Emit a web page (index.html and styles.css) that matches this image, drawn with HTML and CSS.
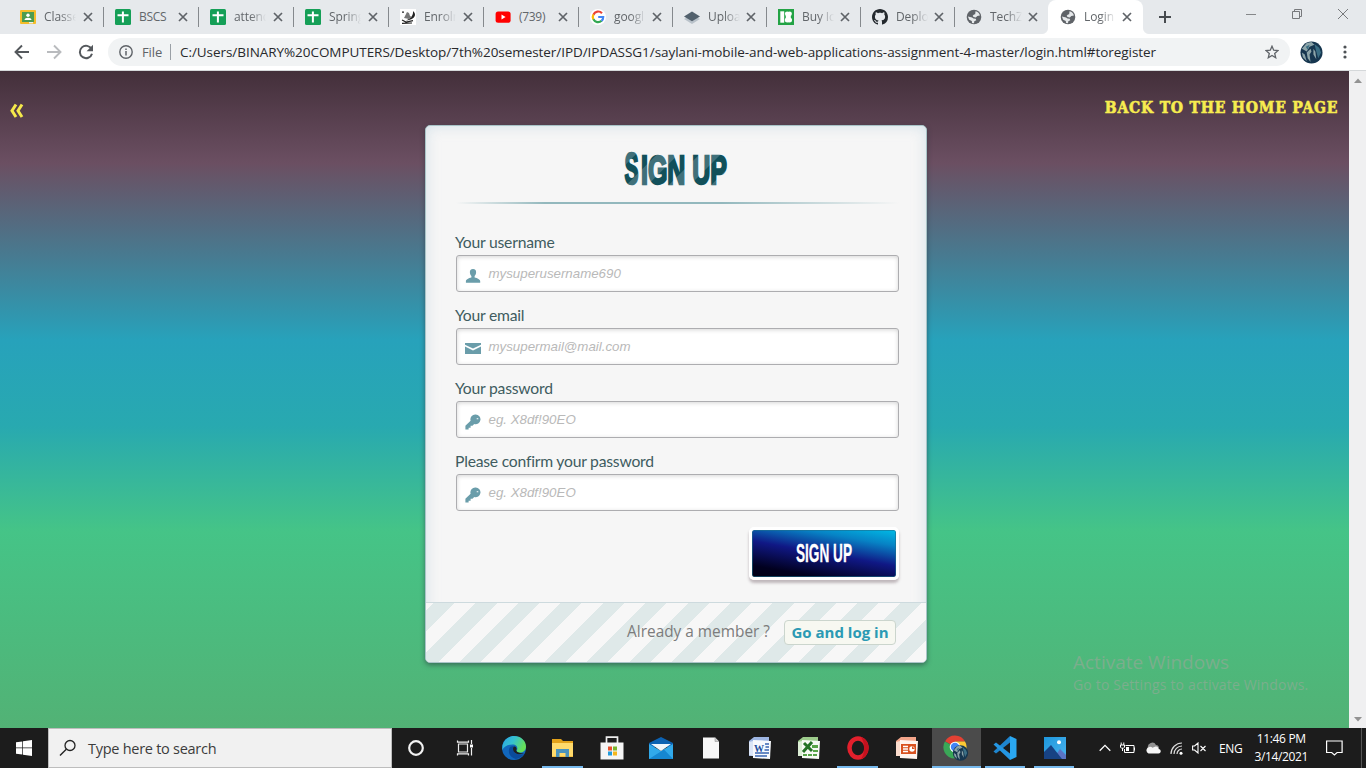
FILE: index.html
```html
<!DOCTYPE html>
<html lang="en">
<head>
<meta charset="utf-8">
<title>Login</title>
<link rel="stylesheet" href="styles.css">
</head>
<body>
<svg class="defs" width="0" height="0">
  <defs>
    <pattern id="titleStripes" width="30" height="30" patternUnits="userSpaceOnUse" patternTransform="rotate(-45)">
      <rect width="30" height="30" fill="#12505a"/><rect width="30" height="15" fill="#40707a"/>
    </pattern>
    <linearGradient id="edgeBlue" x1="0" y1="0" x2="1" y2="0.4"><stop offset="0" stop-color="#2aa5e4"/><stop offset="0.5" stop-color="#35c1d0"/><stop offset="1" stop-color="#66df58"/></linearGradient>
    <linearGradient id="photoSky" x1="0" y1="0" x2="1" y2="1"><stop offset="0" stop-color="#1d97dd"/><stop offset="1" stop-color="#4cb4ee"/></linearGradient>
    <symbol id="close" viewBox="0 0 10 10"><path d="M1 1l8 8M9 1L1 9" stroke="#5f6368" stroke-width="1.7" fill="none"/></symbol>
    <symbol id="sheet" viewBox="0 0 16 16"><rect width="16" height="16" rx="1.5" fill="#159f57"/><path d="M7.9 2.5v11M2.5 6.2h11" stroke="#fff" stroke-width="2" fill="none"/></symbol>
    <symbol id="globe" viewBox="0 0 16 16"><circle cx="8" cy="8" r="7.3" fill="#5f6368"/><path d="M9.500 2.300c2.300.3 4 2 4.400 4.200l-2.600.5-1.500 1.400-2.300-.4-.8-1.300 1.300-1.200 1.200-.2zM1.900 7.500l4.200.9 1.400 1.200 2.200.2.600 1.500-2 .9-.3 2.100-2-.2-.2-2-2.600-1.300z" fill="#e6e9eb"/></symbol>
    <symbol id="key" viewBox="0 0 16 16"><path fill="#6a9daa" fill-rule="evenodd" d="M10.700.4a4.900 4.900 0 0 0-5.100 6.300L.4 11.800V15.500h3.200v-1.800h2v-2h1.900L9.200 10A4.900 4.900 0 1 0 10.700.4zm1 3.800h1.600v1h-1.600z"/></symbol>
    <symbol id="earth" viewBox="0 0 24 24"><circle cx="12" cy="12" r="11.500" fill="#16364f"/><path d="M2 8l5-6 5-1 3 3-5 2-3 5zM7 12l4-4 1 3-2 3 1 8-3-4zM14 8l2 3 1 8-3-5zM2 12l3 2 2 7-4-4z" fill="#8da5a9"/><path d="M15 3l5 4 2 5-3 6-2-7zM6 6l4-2-2 5z" fill="#3b6f85"/></symbol>
  </defs>
</svg>

<div class="screen">
  <div class="tabstrip">
    <div class="tab wide"><svg class="fav" viewBox="0 0 16 16"><rect y="1" width="16" height="14" rx="1" fill="#f4bd2a"/><rect x="2" y="3" width="12" height="10" fill="#4c9c50"/><circle cx="8" cy="6.3" r="1.7" fill="#fff"/><path d="M4.500 11c0-3 7-3 7 0z" fill="#fff"/><path d="M9 13h4v1.400H9z" fill="#eee"/></svg><span class="tab-title">Classe</span><svg class="x"><use href="#close"/></svg></div>
    <div class="tab wide"><svg class="fav"><use href="#sheet"/></svg><span class="tab-title plain">BSCS</span><svg class="x"><use href="#close"/></svg></div>
    <div class="tab wide"><svg class="fav"><use href="#sheet"/></svg><span class="tab-title">attend</span><svg class="x"><use href="#close"/></svg></div>
    <div class="tab wide"><svg class="fav"><use href="#sheet"/></svg><span class="tab-title">Spring</span><svg class="x"><use href="#close"/></svg></div>
    <div class="tab wide"><svg class="fav" viewBox="0 0 16 16"><rect width="16" height="16" fill="#fff"/><path d="M13 2c4.500 4 1 9-7 9.500 4.500-2 7.500-4.500 7-9.500z" fill="#222"/><path d="M4 9l3-6 2 1 1 3 2 1-3 2z" fill="#777"/><path d="M2 3.200h2M2 11l4 2 7-1.300M2 14.300l10-.3" stroke="#222" stroke-width="1.200" fill="none"/></svg><span class="tab-title">Enroln</span><svg class="x"><use href="#close"/></svg></div>
    <div class="tab wide"><svg class="fav" viewBox="0 0 16 16"><rect x=".6" y="2.400" width="15" height="11.400" rx="2.500" fill="#f00"/><path d="M6.500 5.600v4.800L10.600 8z" fill="#fff"/></svg><span class="tab-title plain">(739)</span><svg class="x"><use href="#close"/></svg></div>
    <div class="tab"><svg class="fav" viewBox="0 0 16 16"><circle cx="8" cy="8" r="8" fill="#fff"/><g fill="none" stroke-width="2.200"><path d="M12 4.200A5.200 5.200 0 0 0 3.400 5.700" stroke="#ea4335"/><path d="M3.400 5.500a5.200 5.200 0 0 0 0 5" stroke="#fbbc05"/><path d="M3.400 10.300a5.200 5.200 0 0 0 8.200 1.500" stroke="#34a853"/><path d="M11.500 11.900A5 5 0 0 0 13.200 8H8.200" stroke="#4285f4"/></g></svg><span class="tab-title">googl</span><svg class="x"><use href="#close"/></svg></div>
    <div class="tab"><svg class="fav" viewBox="0 0 16 16"><path d="M0 10l8 5 8-5-8-4z" fill="#b9c2ca"/><path d="M0 7.500L8 2.600l8 4.900-8 4.800z" fill="#52616d"/></svg><span class="tab-title">Uploa</span><svg class="x"><use href="#close"/></svg></div>
    <div class="tab"><svg class="fav" viewBox="0 0 16 16"><rect width="16" height="16" fill="#23a345"/><path d="M2.300 2.300H6.200v11.400H2.300z" fill="#fff"/><g fill="#fff"><circle cx="9.200" cy="4.800" r="2.300"/><circle cx="11.600" cy="4.800" r="2.300"/><circle cx="9.300" cy="11" r="2.500"/><circle cx="11.500" cy="11" r="2.500"/><path d="M7.800 5h5v6h-5z"/></g></svg><span class="tab-title">Buy Ic</span><svg class="x"><use href="#close"/></svg></div>
    <div class="tab"><svg class="fav" viewBox="0 0 16 16"><path fill="#24292e" d="M8 0C3.580 0 0 3.580 0 8c0 3.540 2.290 6.530 5.470 7.590.4.070.550-.170.550-.380 0-.190-.010-.820-.010-1.490-2.010.370-2.530-.490-2.690-.940-.090-.230-.480-.940-.820-1.130-.280-.150-.680-.520-.010-.530.630-.010 1.080.580 1.230.820.720 1.210 1.870.870 2.330.660.070-.520.280-.870.510-1.070-1.780-.2-3.640-.890-3.640-3.950 0-.870.310-1.590.820-2.150-.080-.2-.360-1.020.080-2.120 0 0 .670-.210 2.200.820.640-.180 1.320-.270 2-.270s1.360.090 2 .270c1.530-1.040 2.200-.820 2.200-.820.440 1.100.160 1.920.080 2.120.510.560.820 1.270.820 2.150 0 3.070-1.870 3.750-3.650 3.950.290.250.540.730.540 1.480 0 1.070-.010 1.930-.010 2.200 0 .210.150.460.550.380A8.010 8.010 0 0 0 16 8c0-4.420-3.580-8-8-8z"/></svg><span class="tab-title">Deplo</span><svg class="x"><use href="#close"/></svg></div>
    <div class="tab last"><svg class="fav"><use href="#globe"/></svg><span class="tab-title">TechZ</span><svg class="x"><use href="#close"/></svg></div>
    <div class="tab active"><svg class="fav"><use href="#globe"/></svg><span class="tab-title">Login</span><svg class="x"><use href="#close"/></svg></div>
    <svg class="newtab" viewBox="0 0 12 12"><path d="M6 0v12M0 6h12" stroke="#474b4f" stroke-width="2"/></svg>
    <div class="winbtns">
      <svg width="10" height="10" viewBox="0 0 10 10"><path d="M0 5.500h10" stroke="#858789"/></svg>
      <svg width="10" height="10" viewBox="0 0 10 10"><path d="M.5 2.500h7v7h-7zM2.500 2.500v-2h7v7h-2" stroke="#77797c" fill="none"/></svg>
      <svg width="10" height="10" viewBox="0 0 10 10"><path d="M0 0l10 10M10 0L0 10" stroke="#77797c"/></svg>
    </div>
  </div>

  <div class="toolbar">
    <svg class="nav" viewBox="0 0 16 16"><path d="M15 8H2M8 1.500L1.500 8 8 14.500" stroke="#54585c" stroke-width="1.900" fill="none"/></svg>
    <svg class="nav" viewBox="0 0 16 16"><path d="M1 8h13M8 1.500L14.500 8 8 14.500" stroke="#b9bbbe" stroke-width="1.900" fill="none"/></svg>
    <svg class="nav" viewBox="0 0 16 16"><path d="M13.600 5.200A6.200 6.200 0 1 0 14 9.700" stroke="#54585c" stroke-width="2" fill="none"/><path d="M15 .8v6.400H8.600z" fill="#54585c"/></svg>
    <div class="omnibox">
      <svg class="info" viewBox="0 0 14 14"><circle cx="7" cy="7" r="6.200" stroke="#5f6368" stroke-width="1.400" fill="none"/><path d="M7 6v4.500M7 3.400v1.500" stroke="#5f6368" stroke-width="1.500"/></svg>
      <span class="scheme">File</span>
      <span class="url">C:/Users/BINARY%20COMPUTERS/Desktop/7th%20semester/IPD/IPDASSG1/saylani-mobile-and-web-applications-assignment-4-master/login.html#toregister</span>
      <svg class="star" viewBox="0 0 14 14"><path d="M7 1.200l1.700 4 4.300.4-3.300 2.800 1 4.300L7 10.400l-3.700 2.300 1-4.300L1 5.600l4.300-.4z" stroke="#5f6368" stroke-width="1.300" fill="none"/></svg>
    </div>
    <svg class="avatar"><use href="#earth"/></svg>
    <svg class="dots" viewBox="0 0 4 14"><g fill="#4e5256"><circle cx="2" cy="2" r="1.600"/><circle cx="2" cy="7" r="1.600"/><circle cx="2" cy="12" r="1.600"/></g></svg>
  </div>

  <div class="viewport">
    <main class="page">
      <div class="topbar">
        <svg class="chev" width="16" height="16" viewBox="0 0 16 16"><path d="M7 1.500L3 7.800 7 14M13 1.500L9 7.800l4 6.200" stroke="#f5e94b" stroke-width="3" fill="none"/></svg>
        <svg class="home" width="236" height="24"><text transform="scale(.92 1)" x="2" y="18.500" textLength="253" lengthAdjust="spacing">BACK TO THE HOME PAGE</text></svg>
      </div>
      <section class="card">
        <div class="card-body">
          <svg class="title" width="108" height="44"><text class="cap" x="1.500" y="38" textLength="14" lengthAdjust="spacingAndGlyphs">S</text><text x="18" y="38" textLength="86" lengthAdjust="spacingAndGlyphs">IGN UP</text></svg>
          <div class="rule"></div>
          <div class="field"><span class="label">Your username</span><div class="input"><svg class="ico" viewBox="0 0 16 16"><path fill="#6a9daa" d="M8 .9c2.300 0 3.300 1.500 3.100 3.500-.1 1.500-.6 2.700-1.500 3.500v1.700c2.800.7 5.600 1.800 5.600 3.700v1.500H.9v-1.500c0-1.900 2.800-3 5.500-3.700V7.900c-.9-.8-1.400-2-1.500-3.500C4.700 2.400 5.700.9 8 .9z"/></svg><span class="ph">mysuperusername690</span></div></div>
          <div class="field"><span class="label">Your email</span><div class="input"><svg class="ico" viewBox="0 0 16 16"><path fill="#6a9daa" d="M0 2h16v1.700L8 7.500 0 3.700zM0 5.500l8 4 8-4V13H0z"/></svg><span class="ph">mysupermail@mail.com</span></div></div>
          <div class="field"><span class="label">Your password</span><div class="input"><svg class="ico"><use href="#key"/></svg><span class="ph">eg. X8df!90EO</span></div></div>
          <div class="field"><span class="label">Please confirm your password</span><div class="input"><svg class="ico"><use href="#key"/></svg><span class="ph">eg. X8df!90EO</span></div></div>
          <div class="btn"><svg width="60" height="30"><text x="2" y="23" textLength="56" lengthAdjust="spacingAndGlyphs">SIGN UP</text></svg></div>
        </div>
        <div class="card-foot"><span class="member">Already a member ?</span><span class="login">Go and log in</span></div>
      </section>
      <div class="watermark"><span class="w1">Activate Windows</span><span class="w2">Go to Settings to activate Windows.</span></div>
    </main>
    <div class="scrollbar">
      <svg width="8" height="5" viewBox="0 0 8 5"><path d="M0 5l4-4.500L8 5z" fill="#929292"/></svg>
      <svg width="8" height="5" viewBox="0 0 8 5"><path d="M0 0l4 4.500L8 0z" fill="#929292"/></svg>
    </div>
  </div>

  <div class="taskbar">
    <div class="start"><svg width="16" height="16" viewBox="0 0 16 16"><path fill="#fff" d="M0 2.300L6.300 1.400v6.200H0zM7 1.300L16 0v7.600H7zM0 8.300h6.300v6.200L0 13.700zM7 8.300h9V16l-9-1.300z"/></svg></div>
    <div class="search"><svg width="18" height="18" viewBox="0 0 18 18"><circle cx="11" cy="6.500" r="5" stroke="#222" stroke-width="1.300" fill="none"/><path d="M7.300 10.200L1 16.500" stroke="#222" stroke-width="1.400"/></svg><span>Type here to search</span></div>
    <div class="apps">
      <div class="app"><svg width="18" height="18" viewBox="0 0 18 18"><circle cx="9" cy="9" r="6.800" stroke="#f2f2f2" stroke-width="2.200" fill="none"/></svg></div>
      <div class="app"><svg width="18" height="18" viewBox="0 0 18 18"><path d="M2.500 5h9v8h-9zM1.500 1.500v1.700h11V1.500M1.500 16.500v-1.700h11v1.700M15.500 1v4M15.500 9v7.500" stroke="#eee" stroke-width="1.200" fill="none"/><path d="M14 5.500h3v3h-3z" fill="#fff"/></svg></div>
      <div class="app"><svg width="24" height="24" viewBox="0 0 24 24"><circle cx="12" cy="12" r="12" fill="#1167bd"/><path d="M.6 9C2 3.500 6.500 0 12 0c7 0 12 5 12 10.500 0 4-3 6-6 6-2.500 0-4-1-3-2.500 1-2 0-5.500-4.500-5.500C6 8.500 2 10 .3 14z" fill="url(#edgeBlue)"/><path d="M8 11c-3 5 0 11 6 12 4-.5 7-3 8.300-5.500-4 2.500-11 1-11-4.500 0-1 .3-2 .7-2.500-1.500-.5-3-.2-4 .5z" fill="#0a4b9b"/><path d="M12 10.500c-1.500 1-1.300 4.500 1 6.200 2.500 1.900 6 2 9 .6-2 .2-5-.2-6.500-1.200-1.500-.9-1.500-1.500-1-2.500.5-1.200-.5-3.500-2.500-3.100z" fill="#1d2022"/></svg></div>
      <div class="app open"><svg width="24" height="22" viewBox="0 0 24 22"><path d="M1 3.500V2h9l2 2h10v16H1z" fill="#e3a21a"/><path d="M1 6h21v13.500H1z" fill="#ffda6b"/><path d="M5 20v-8h13v8h-3.500v-4h-6v4z" fill="#4a93bd"/></svg></div>
      <div class="app"><svg width="24" height="24" viewBox="0 0 24 24"><path d="M6.500 8V1.200h11V8" stroke="#eee" stroke-width="1.700" fill="none"/><path d="M.5 6.500h23v17H.5z" fill="#f5f5f5"/><path d="M8 10.500h4v4H8z" fill="#e8502b"/><path d="M13 10.500h4v4h-4z" fill="#79b52c"/><path d="M8 15.500h4v4H8z" fill="#219bdc"/><path d="M13 15.500h4v4h-4z" fill="#f4b71c"/></svg></div>
      <div class="app"><svg width="24" height="22" viewBox="0 0 24 22"><path d="M0 6L12 0l12 6v4H0z" fill="#0c62b2"/><path d="M0 7l12 7 12-7v15H0z" fill="#31a9ea"/><path d="M0 22l15-9.500L24 22z" fill="#1687d1"/><path d="M2 7h20l-10 7z" fill="#eef6fc"/></svg></div>
      <div class="app"><svg width="18" height="22" viewBox="0 0 18 22"><path d="M1 .5h12l4 4v17H1z" fill="#f7f7f7"/><path d="M13 .5v4h4" fill="#ccc" stroke="#999" stroke-width=".6"/></svg></div>
      <div class="app"><svg width="24" height="24" viewBox="0 0 24 24"><path d="M1 5l5-4h15v4L6 20H1z" fill="#9db5e2"/><path d="M5 4l18 1-1 18-17-1z" fill="#f7f9fd"/><path d="M1 6l4-1v15l-4-1z" fill="#dbe5f7"/><path d="M17 8h4M17.500 11h3.500M16.500 14h4.500M7 17h14M7 20h12" stroke="#3763b0" stroke-width="1.300"/><text class="glyph" x="6" y="15.500" fill="#244f9e">W</text></svg></div>
      <div class="app"><svg width="24" height="24" viewBox="0 0 24 24"><path d="M1 5l5-4h15v4L6 20H1z" fill="#9dcc8c"/><path d="M5 4l18 1-1 18-17-1z" fill="#f7faf4"/><path d="M1 6l4-1v15H1z" fill="#dceed5"/><path d="M7 7l8 8M15 6L6 16" stroke="#247224" stroke-width="3"/><path d="M15 9h6v3h-6zM16 14h5v2h-5zM6 18h4v2H6zM11 18h4v2h-4zM16 18h4v2h-4z" fill="#57a447"/></svg></div>
      <div class="app open"><svg width="24" height="24" viewBox="0 0 24 24"><ellipse cx="12" cy="12" rx="8.500" ry="9.500" fill="none" stroke="#e3202c" stroke-width="4.500"/><path d="M15 1c10 3 10 19 0 22 4-5 4-17 0-22z" fill="#c4111e"/></svg></div>
      <div class="app"><svg width="24" height="24" viewBox="0 0 24 24"><path d="M1 5l5-4h15v4L6 20H1z" fill="#f3a58a"/><path d="M5 4l18 1-1 18-17-1z" fill="#fff4ef"/><path d="M1 6l4-1v15H1z" fill="#fbdccd"/><path d="M6 8h15v10H6z" fill="#d95220"/><path d="M8 10.500h5M8 13h5M8 15.500h5" stroke="#fff" stroke-width="1.300"/><circle cx="17" cy="13" r="2.700" fill="#fff"/><path d="M17 10v3h3z" fill="#d95220"/></svg></div>
      <div class="app current"><svg width="26" height="26" viewBox="0 0 26 26"><path d="M12 12L2.100 6.300A11.300 11.300 0 0 1 22 6.500H12z" fill="#e34133"/><path d="M12 12L1.900 6.500A11.300 11.300 0 0 0 11.500 23.500l5-9z" fill="#3aa757"/><path d="M12 6.500h10a11.300 11.300 0 0 1-10 17l4.500-9z" fill="#fcc934"/><circle cx="12" cy="12" r="5.300" fill="#fff"/><circle cx="12" cy="12" r="4.200" fill="#4285f4"/><use href="#earth" x="9.500" y="10" width="16" height="16"/></svg></div>
      <div class="app open"><svg width="24" height="24" viewBox="0 0 24 24"><path d="M17 0l6.500 3v18L17 24z" fill="#2aa8f2"/><path d="M17 0v6.500L3 17.500.500 15.500z" fill="#1e85cf"/><path d="M17 24v-6.500L3 6.500.5 8.500z" fill="#2496e3"/></svg></div>
      <div class="app open"><svg width="22" height="22" viewBox="0 0 22 22"><path d="M0 0h22v22H0z" fill="url(#photoSky)"/><path d="M9 22l7-10 6 6v4z" fill="#5a73c4"/><path d="M0 15l7-7 11 14H0z" fill="#174283"/><circle cx="15" cy="5.200" r="2" fill="#fff"/></svg></div>
    </div>
    <div class="tray">
      <svg width="12" height="8" viewBox="0 0 12 8"><path d="M.7 6.800L6 1.400l5.300 5.400" stroke="#fff" stroke-width="1.300" fill="none"/></svg>
      <svg width="16" height="12" viewBox="0 0 16 12"><path d="M5.500 3.500h8.500v7H4.500V7M14.500 5.500v3M1.200.5v2.500M3.800.5v2.500M.5 3h4v2.200l-1 1h-2l-1-1zM2.500 6v3" stroke="#fff" fill="none"/><path d="M6 5h3v4H6z" fill="#fff"/></svg>
      <svg width="16" height="12" viewBox="0 0 16 12"><path d="M3 6a4.300 4.300 0 0 1 8-3c2 0 3 1 3 4z" fill="#929292"/><path d="M3.500 11.500a3.400 3.400 0 0 1 1-6.500c1-.4 2 0 3 .8l3-1.300c2-.5 2.800 1 3 2.500 3.200.5 2.800 4.500 0 4.500z" fill="#f5f5f5"/></svg>
      <svg width="13" height="13" viewBox="0 0 13 13"><path d="M1 12A11 11 0 0 1 12 1M4 12a8 8 0 0 1 8-8M7 12a5 5 0 0 1 5-5" stroke="#ddd" stroke-width="1.200" fill="none"/><circle cx="11" cy="11.300" r="1.500" fill="#fff"/></svg>
      <svg width="15" height="12" viewBox="0 0 15 12"><path d="M.6 4h2L6 1v10L2.600 8h-2zM8.500 4l5 5M13.500 4l-5 5" stroke="#fff" stroke-width="1.100" fill="none"/></svg>
      <span class="lang">ENG</span>
      <div class="clock"><span class="time">11:46 PM</span><span class="date">3/14/2021</span></div>
      <svg class="notif" width="17" height="16" viewBox="0 0 17 16"><path d="M.6 1h15.500v11.500h-5L8.400 15l-2.700-2.500H.6z" stroke="#fff" stroke-width="1.200" fill="none"/></svg>
      <div class="peek"></div>
    </div>
  </div>
</div>
</body>
</html>
```
FILE: styles.css
```css
* { box-sizing: border-box; }
body { margin: 0; overflow: hidden; font-family: "Open Sans", "Noto Sans", sans-serif; }
svg { display: block; flex: none; }
.defs { position: absolute; }
.screen { width: 1366px; height: 768px; display: flex; flex-direction: column; }

.tabstrip { height: 34px; background: #e6e9ec; display: flex; padding-left: 9px; align-items: stretch; }
.tab { width: 94px; flex: none; display: flex; align-items: center; padding-left: 11px; position: relative; }
.tab.wide { width: 95px; }
.tab::after { content: ""; position: absolute; right: 0; top: 7px; width: 1px; height: 20px; background: #85898d; }
.tab.last::after { display: none; }
.tab.active { width: 95px; margin-left: -1px; padding-left: 12px; background: #fff; border-radius: 8px 8px 0 0; }
.tab.active::before, .tab.active::after { content: ""; position: absolute; top: auto; bottom: 0; width: 6px; height: 6px; }
.tab.active::before { left: -6px; background: radial-gradient(circle at 0 0, #e6e9ec 5.5px, #fff 6.5px); }
.tab.active::after { right: -6px; background: radial-gradient(circle at 100% 0, #e6e9ec 5.5px, #fff 6.5px); }
.fav { width: 16px; height: 16px; }
.tab-title { margin-left: 8px; width: 32px; white-space: nowrap; font-size: 12px; letter-spacing: -0.1px; line-height: 18px; color: #62666a; -webkit-mask-image: linear-gradient(90deg, #000 50%, transparent); mask-image: linear-gradient(90deg, #000 50%, transparent); }
.tab-title.plain { -webkit-mask-image: none; mask-image: none; letter-spacing: -0.3px; }
.x { width: 10px; height: 10px; margin-left: 7px; }
.tab:not(.wide) .x { margin-left: 6px; }
.newtab { width: 12px; height: 12px; margin: 11px 0 0 16px; }
.winbtns { margin-left: auto; display: flex; gap: 36px; padding: 9px 18px 0 0; }

.toolbar { height: 37px; background: #fff; border-bottom: 1px solid #d5d8da; display: flex; align-items: center; padding-left: 14px; }
.nav { width: 16px; height: 16px; margin-right: 16px; }
.omnibox { width: 1182px; height: 28px; margin-left: -2px; background: #f1f3f4; border-radius: 14px; display: flex; align-items: center; padding: 0 11px; white-space: nowrap; }
.info { width: 14px; height: 14px; }
.scheme { margin-left: 9px; width: 29px; height: 16px; line-height: 16px; color: #5f6368; border-right: 1px solid #9aa0a6; font-size: 13px; letter-spacing: -0.1px; }
.url { margin-left: 9px; color: #28292c; font-size: 13.5px; letter-spacing: -0.055px; }
.star { width: 14px; height: 14px; margin-left: auto; }
.avatar { width: 23px; height: 23px; margin-left: 10px; }
.dots { width: 4px; height: 14px; margin-left: 20px; }

.viewport { height: 657px; display: flex; }
.page { width: 1349px; position: relative; background: linear-gradient(#432f3a 0%, #6b4f62 14%, #27a2bb 41%, #28a9b0 54%, #45c487 70%, #52b275 100%); display: flex; flex-direction: column; align-items: center; }
.topbar { width: 100%; height: 54px; display: flex; justify-content: space-between; padding: 24px 10px 0 9px; }
.chev { margin-top: 8px; }
.home text { font: bold 17px "DejaVu Serif Condensed", "DejaVu Serif", serif; fill: #f7ec4f; stroke: #f7ec4f; stroke-width: .6px; }
.card { width: 502px; height: 538px; margin-left: 3px; background: #f6f6f6; border-radius: 5px; border: 1px solid #a9c4c8; box-shadow: 0 2px 5px rgba(40,50,60,.55), inset 0 0 14px rgba(190,212,225,.6); display: flex; flex-direction: column; overflow: hidden; }
.card-body { height: 476px; padding: 20px 27px 0 30px; display: flex; flex-direction: column; }
.title { margin: 0 0 0 167px; overflow: visible; }
.title text { font: bold 40px "Liberation Sans Narrow", "Liberation Sans", sans-serif; fill: url(#titleStripes); stroke: url(#titleStripes); stroke-width: 2.4px; }
.title .cap { font-size: 45px; }
.rule { height: 2px; margin-top: 12px; margin-bottom: 28px; background: linear-gradient(90deg, rgba(147,184,189,0), #93b8bd 20%, #93b8bd 60%, rgba(147,184,189,0)); }
.field { height: 73px; flex: none; display: flex; flex-direction: column; }
.label { height: 23px; line-height: 20px; margin-left: -1px; color: #405c60; font-family: Lato, sans-serif; font-size: 15.7px; letter-spacing: -.22px; white-space: nowrap; }
.input { height: 37px; background: #fff; border: 1px solid #adadb0; border-radius: 3px; box-shadow: inset 0 1px 4px rgba(0,0,0,.17); display: flex; align-items: center; padding-left: 8px; }
.ico { width: 16px; height: 16px; margin-top: 4px; }
.ph { margin-left: 7.5px; font: italic 13.3px "Liberation Sans", Arial, sans-serif; color: #b9b9b9; }
.btn { width: 150px; height: 53px; flex: none; margin-left: auto; margin-top: 3px; border: 3px solid #fff; border-radius: 5px; box-shadow: 0 3px 3px rgba(110,90,100,.4), inset 0 0 0 1px rgba(30,110,140,.6); background: linear-gradient(190deg, #00bbe6 0%, #0783c5 22%, #101885 50%, #01001f 84%, #010015 100%) padding-box; display: flex; align-items: center; justify-content: center; }
.btn text { font: bold 25px "Liberation Sans Narrow", "Liberation Sans", sans-serif; fill: #fff; stroke: #fff; stroke-width: .3px; }
.card-foot { height: 60px; flex: none; border-top: 1px solid #cddade; background: repeating-linear-gradient(-45deg, #f7f7f7 0 15px, #dfe9e9 15px 30px); display: flex; align-items: center; justify-content: flex-end; padding-right: 30px; font-size: 15px; }
.member { color: #7c7c7c; margin-right: 14px; font-size: 15.4px; line-height: 20px; padding-bottom: 1px; }
.login { height: 25px; line-height: 23px; width: 112px; text-align: center; border: 1px solid #cbd5cd; border-radius: 4px; background: #f7f8f1; color: #2b9ab4; font-weight: bold; white-space: nowrap; }
.watermark { position: absolute; left: 1073px; top: 579px; display: flex; flex-direction: column; color: #7bae8d; white-space: nowrap; }
.w1 { font-size: 19px; line-height: 24px; }
.w2 { font-size: 14px; line-height: 21px; letter-spacing: .17px; }
.scrollbar { width: 17px; background: #f0f0f1; display: flex; flex-direction: column; justify-content: space-between; align-items: center; padding: 7px 0 6px; }

.taskbar { height: 40px; background: #1c1c1c; display: flex; color: #fff; }
.start { width: 48px; display: flex; align-items: center; justify-content: center; }
.search { width: 344px; background: #f1f1f1; border: 1px solid #bdbdbd; display: flex; align-items: center; padding-left: 10px; color: #3c3c3c; font-size: 14.5px; letter-spacing: -.27px; white-space: nowrap; }
.search span { margin-left: 11px; }
.apps { width: 687px; margin-left: -1px; display: flex; }
.app { width: 49.16px; flex: none; display: flex; align-items: center; justify-content: center; position: relative; }
.app.open::after, .app.current::after { content: ""; position: absolute; bottom: 0; left: 4px; right: 5px; height: 2px; background: #76b9ed; }
.app.current { background: #4b4b4b; }
.app.current::after { left: 0; right: 0; }
.glyph { font: bold 10px "Liberation Serif", serif; }
.tray { flex: 1; display: flex; align-items: center; padding-left: 21px; gap: 9px; position: relative; }
.lang { font-size: 12px; margin-left: 3px; letter-spacing: -.4px; }
.clock { width: 56px; display: flex; flex-direction: column; align-items: center; font-size: 12px; line-height: 18px; letter-spacing: -.35px; white-space: nowrap; margin-left: 2px; }
.notif { margin-left: 8px; }
.peek { position: absolute; right: 4px; top: 0; width: 1px; height: 40px; background: #555; }
```
